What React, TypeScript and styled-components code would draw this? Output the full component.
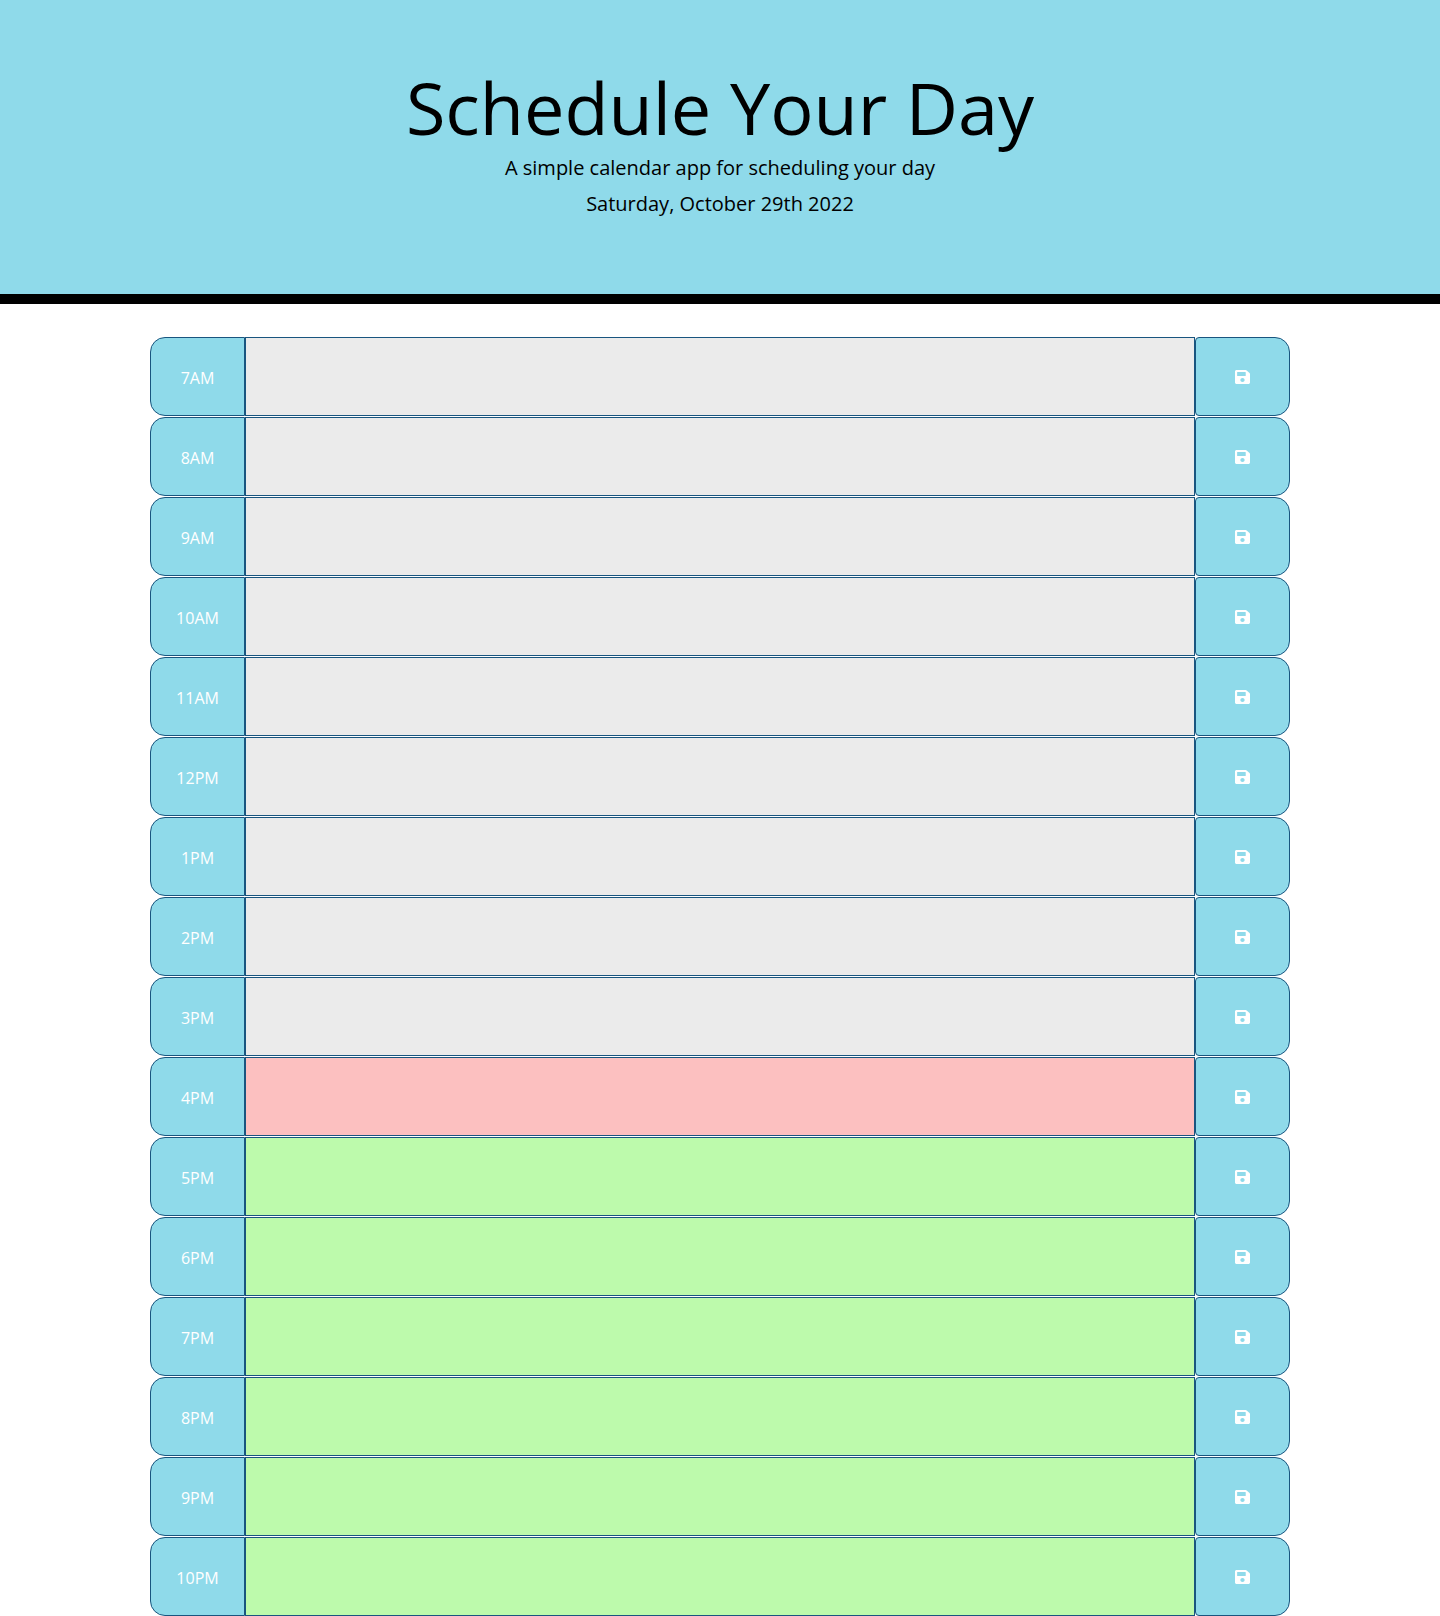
import React from "react";
import styled, { createGlobalStyle } from "styled-components";
import { FaSave } from "react-icons/fa";

const GlobalStyle = createGlobalStyle`
  *, *::before, *::after { box-sizing: border-box; }
  body {
    margin: 0;
    background: #fff;
    color: #000;
    font-family: "Open Sans", sans-serif;
    font-size: 16px;
    line-height: 1;
  }
`;

const Header = styled.header`
  height: 304px;
  padding: 64px 32px;
  border-bottom: 10px solid #000;
  background: #8fdaea;
  text-align: center;
`;

const Title = styled.h1`
  margin: 0 0 3px;
  font-size: 72px;
  font-weight: 400;
  line-height: 86.4px;
`;

const Lead = styled.p`
  margin: 0 0 6px;
  font-size: 20px;
  font-weight: 400;
  line-height: 30px;
`;

const Planner = styled.main`
  display: grid;
  gap: 1px;
  width: 1140px;
  margin: 33px auto 0;
`;

const Row = styled.div`
  display: grid;
  grid-template-columns: 95px 950px 95px;
  height: 79px;
`;

const Hour = styled.div`
  display: flex;
  align-items: center;
  justify-content: center;
  padding-top: 2px;
  border: 1px solid #19557f;
  border-radius: 15px 0 0 15px;
  background: #8fdaea;
  color: #fff;
`;

const colours = { past: "#ebebeb", present: "#fcc0c0", future: "#bdfaac" };
type Phase = keyof typeof colours;

const Entry = styled.textarea<{ $phase: Phase }>`
  display: block;
  width: 100%;
  height: 79px;
  padding: 0 12px;
  border: 1px solid #19557f;
  resize: none;
  outline: none;
  font: inherit;
  background: ${(p) => colours[p.$phase]};
`;

const SaveButton = styled.button`
  display: flex;
  align-items: center;
  justify-content: center;
  padding: 0;
  border: 1px solid #19557f;
  border-radius: 4px 15px 15px 4px;
  background: #8fdaea;
  color: #fff;
  font-size: 16px;
`;

const SaveIcon = styled(FaSave)`
  width: 15px;
  height: 16px;
`;

const FIRST = 7;
const LAST = 22;
const NOW = 16;
const hours = Array.from({ length: LAST - FIRST + 1 }, (_, i) => FIRST + i);
const label = (h: number) => `${h > 12 ? h - 12 : h}${h < 12 ? "AM" : "PM"}`;
const phase = (h: number): Phase => (h < NOW ? "past" : h === NOW ? "present" : "future");

export default function App() {
  return (
    <>
      <GlobalStyle />
      <Header>
        <Title>Schedule Your Day</Title>
        <Lead>A simple calendar app for scheduling your day</Lead>
        <Lead>Saturday, October 29th 2022</Lead>
      </Header>
      <Planner>
        {hours.map((h) => (
          <Row key={h}>
            <Hour>{label(h)}</Hour>
            <Entry $phase={phase(h)} aria-label={label(h)} />
            <SaveButton aria-label="Save">
              <SaveIcon preserveAspectRatio="none" />
            </SaveButton>
          </Row>
        ))}
      </Planner>
    </>
  );
}
